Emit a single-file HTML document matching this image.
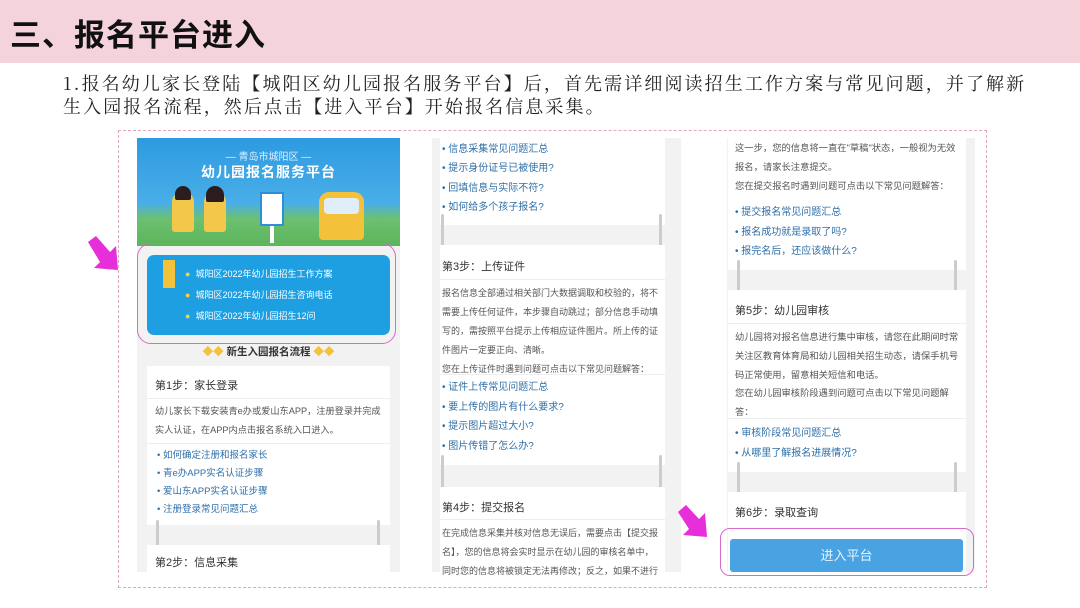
<!DOCTYPE html>
<html><head><meta charset="utf-8"><style>
*{margin:0;padding:0;box-sizing:border-box}
body{width:1080px;height:608px;position:relative;background:#fff;overflow:hidden;font-family:"Liberation Sans","Noto Sans CJK SC",sans-serif}
.a{position:absolute}
.hdr{left:0;top:0;width:1080px;height:63px;background:#f4d3dd}
.ttl{left:10px;top:10px;font-size:31px;font-weight:bold;color:#111;letter-spacing:1px}
.intro{left:63px;top:72px;font-family:"Noto Serif CJK SC",serif;font-size:18px;line-height:23px;color:#222;white-space:nowrap;letter-spacing:2.1px}
.dash{left:118px;top:130px;width:869px;height:458px;border:1.5px dashed #e0a8bc}
.gray{background:#f2f2f2}
.card{background:#fff}
.t{font-size:9.3px;color:#555;white-space:nowrap;line-height:19px}
.h{font-size:11px;color:#333;white-space:nowrap}
.l{font-size:10px;color:#2f6fa8;white-space:nowrap}
.ln{height:1px;background:#eee}
.con{width:3px;background:#ccc;border-radius:2px}
</style></head><body>
<div class="a hdr"></div>
<div class="a ttl">三、报名平台进入</div>
<div class="a intro">1.报名幼儿家长登陆【城阳区幼儿园报名服务平台】后，首先需详细阅读招生工作方案与常见问题，并了解新<br>生入园报名流程，然后点击【进入平台】开始报名信息采集。</div>
<div class="a dash"></div>

<!-- panel 1 -->
<div class="a gray" style="left:137px;top:138px;width:263px;height:434px"></div>
<div class="a" style="left:137px;top:138px;width:263px;height:108px;background:linear-gradient(#2d9ae0 0,#49aee8 60%,#6cc070 75%,#5bb55a 100%)"></div>
<div class="a" style="left:137px;top:148px;width:263px;text-align:center;color:#dff0ff;font-size:10px">— 青岛市城阳区 —</div>
<div class="a" style="left:137px;top:162px;width:263px;text-align:center;color:#fff;font-size:14px;font-weight:bold;letter-spacing:1px">幼儿园报名服务平台</div>
<div class="a" style="left:172px;top:192px;width:22px;height:40px;background:#f3c84a;border-radius:10px 10px 3px 3px"></div>
<div class="a" style="left:175px;top:186px;width:16px;height:14px;background:#2b1d1d;border-radius:8px 8px 2px 2px"></div>
<div class="a" style="left:204px;top:192px;width:22px;height:40px;background:#f3c84a;border-radius:10px 10px 3px 3px"></div>
<div class="a" style="left:206px;top:186px;width:18px;height:16px;background:#2b1d1d;border-radius:9px 9px 2px 2px"></div>
<div class="a" style="left:260px;top:192px;width:24px;height:34px;background:#fff;border:2px solid #2d8fd8"></div>
<div class="a" style="left:270px;top:226px;width:4px;height:18px;background:#fff"></div>
<div class="a" style="left:319px;top:192px;width:45px;height:48px;background:#f4c13a;border-radius:10px 10px 4px 4px"></div>
<div class="a" style="left:324px;top:198px;width:35px;height:16px;background:#dfeef8;border-radius:4px"></div>
<div class="a" style="left:147px;top:255px;width:243px;height:80px;background:#1e9fe2;border-radius:7px"></div>
<div class="a" style="left:163px;top:260px;width:12px;height:28px;background:#f4c13a"></div>
<div class="a t" style="left:185px;top:265px;color:#fff;font-size:9px"><span style="color:#f4d050">●</span>&nbsp; 城阳区2022年幼儿园招生工作方案</div>
<div class="a t" style="left:185px;top:286px;color:#fff;font-size:9px"><span style="color:#f4d050">●</span>&nbsp; 城阳区2022年幼儿园招生咨询电话</div>
<div class="a t" style="left:185px;top:307px;color:#fff;font-size:9px"><span style="color:#f4d050">●</span>&nbsp; 城阳区2022年幼儿园招生12问</div>
<div class="a" style="left:137px;top:243px;width:259px;height:101px;border:1.5px solid #d86ac8;border-radius:14px"></div>
<div class="a h" style="left:137px;top:344px;width:263px;text-align:center;font-weight:bold;font-size:10.5px"><span style="color:#f4c13a">◆◆</span> 新生入园报名流程 <span style="color:#f4c13a">◆◆</span></div>
<div class="a card" style="left:147px;top:366px;width:243px;height:159px"></div>
<div class="a h" style="left:155px;top:377px">第1步：家长登录</div>
<div class="a ln" style="left:147px;top:398px;width:243px"></div>
<div class="a t" style="left:155px;top:402px;font-size:9.2px">幼儿家长下载安装青e办或爱山东APP，注册登录并完成<br>实人认证，在APP内点击报名系统入口进入。</div>
<div class="a ln" style="left:147px;top:443px;width:243px"></div>
<div class="a l" style="left:157px;top:447px;line-height:18px;font-size:9.5px">• 如何确定注册和报名家长<br>• 青e办APP实名认证步骤<br>• 爱山东APP实名认证步骤<br>• 注册登录常见问题汇总</div>
<div class="a con" style="left:156px;top:520px;height:30px"></div>
<div class="a con" style="left:377px;top:520px;height:30px"></div>
<div class="a card" style="left:147px;top:545px;width:243px;height:27px"></div>
<div class="a h" style="left:155px;top:554px">第2步：信息采集</div>

<!-- panel 2 -->
<div class="a gray" style="left:432px;top:138px;width:249px;height:434px"></div>
<div class="a card" style="left:440px;top:138px;width:225px;height:87px"></div>
<div class="a l" style="left:442px;top:140px;line-height:19.3px">• 信息采集常见问题汇总<br>• 提示身份证号已被使用?<br>• 回填信息与实际不符?<br>• 如何给多个孩子报名?</div>
<div class="a con" style="left:441px;top:214px;height:35px"></div>
<div class="a con" style="left:659px;top:214px;height:35px"></div>
<div class="a card" style="left:440px;top:245px;width:225px;height:220px"></div>
<div class="a h" style="left:442px;top:258px">第3步：上传证件</div>
<div class="a ln" style="left:440px;top:279px;width:225px"></div>
<div class="a t" style="left:442px;top:284px;font-size:9px">报名信息全部通过相关部门大数据调取和校验的，将不<br>需要上传任何证件，本步骤自动跳过；部分信息手动填<br>写的，需按照平台提示上传相应证件图片。所上传的证<br>件图片一定要正向、清晰。<br>您在上传证件时遇到问题可点击以下常见问题解答：</div>
<div class="a ln" style="left:440px;top:374px;width:225px"></div>
<div class="a l" style="left:442px;top:378px;line-height:19.5px">• 证件上传常见问题汇总<br>• 要上传的图片有什么要求?<br>• 提示图片超过大小?<br>• 图片传错了怎么办?</div>
<div class="a con" style="left:441px;top:455px;height:35px"></div>
<div class="a con" style="left:659px;top:455px;height:35px"></div>
<div class="a card" style="left:440px;top:487px;width:225px;height:85px"></div>
<div class="a h" style="left:442px;top:499px">第4步：提交报名</div>
<div class="a ln" style="left:440px;top:519px;width:225px"></div>
<div class="a t" style="left:442px;top:524px;font-size:9px">在完成信息采集并核对信息无误后，需要点击【提交报<br>名】，您的信息将会实时显示在幼儿园的审核名单中，<br>同时您的信息将被锁定无法再修改；反之，如果不进行</div>

<!-- panel 3 -->
<div class="a gray" style="left:727px;top:138px;width:248px;height:434px"></div>
<div class="a card" style="left:728px;top:138px;width:238px;height:132px"></div>
<div class="a t" style="left:735px;top:139px">这一步，您的信息将一直在"草稿"状态，一般视为无效<br>报名，请家长注意提交。<br>您在提交报名时遇到问题可点击以下常见问题解答：</div>
<div class="a l" style="left:735px;top:203px;line-height:19.5px">• 提交报名常见问题汇总<br>• 报名成功就是录取了吗?<br>• 报完名后，还应该做什么?</div>
<div class="a con" style="left:737px;top:260px;height:35px"></div>
<div class="a con" style="left:954px;top:260px;height:35px"></div>
<div class="a card" style="left:728px;top:290px;width:238px;height:182px"></div>
<div class="a h" style="left:735px;top:302px">第5步：幼儿园审核</div>
<div class="a ln" style="left:728px;top:323px;width:238px"></div>
<div class="a t" style="left:735px;top:328px;line-height:18.8px">幼儿园将对报名信息进行集中审核，请您在此期间时常<br>关注区教育体育局和幼儿园相关招生动态，请保手机号<br>码正常使用，留意相关短信和电话。<br>您在幼儿园审核阶段遇到问题可点击以下常见问题解<br>答：</div>
<div class="a ln" style="left:728px;top:418px;width:238px"></div>
<div class="a l" style="left:735px;top:424px;line-height:19.5px">• 审核阶段常见问题汇总<br>• 从哪里了解报名进展情况?</div>
<div class="a con" style="left:737px;top:462px;height:35px"></div>
<div class="a con" style="left:954px;top:462px;height:35px"></div>
<div class="a card" style="left:728px;top:492px;width:238px;height:80px"></div>
<div class="a h" style="left:735px;top:504px">第6步：录取查询</div>
<div class="a" style="left:730px;top:539px;width:233px;height:33px;background:#49a3e2;border-radius:3px;color:#e8f4ff;font-size:13px;text-align:center;line-height:33px">进入平台</div>
<div class="a" style="left:720px;top:528px;width:254px;height:48px;border:1.5px solid #d86ac8;border-radius:10px"></div>

<!-- arrows -->
<svg class="a" style="left:84px;top:236px" width="44" height="40"><path d="M4 6 L12 0 L26 16 L32 10 L34 34 L10 32 L16 26 Z" fill="#e62fd8"/></svg>
<svg class="a" style="left:676px;top:504px" width="40" height="40"><path d="M2 8 L10 1 L23 15 L29 9 L31 33 L7 31 L13 25 Z" fill="#e62fd8"/></svg>
</body></html>
